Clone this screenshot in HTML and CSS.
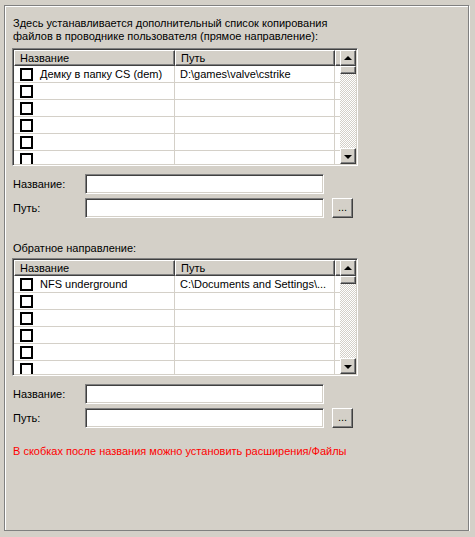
FILE: index.html
```html
<!DOCTYPE html>
<html lang="ru">
<head>
<meta charset="utf-8">
<link rel="stylesheet" href="styles.css">
</head>
<body>
<div class="frame">
  <p class="intro">Здесь устанавливается дополнительный список копирования<br>файлов в проводнике пользователя (прямое направление):</p>

  <div class="list">
    <div class="list-body">
      <div class="list-head">
        <div class="hcell">Название</div>
        <div class="hcell">Путь</div>
        <div class="hcell"></div>
      </div>
      <div class="row"><div class="cell c1"><span class="chk"></span><span class="name">Демку в папку CS (dem)</span></div><div class="cell c2">D:\games\valve\cstrike</div><div class="cell c3"></div></div>
      <div class="row"><div class="cell c1"><span class="chk"></span></div><div class="cell c2"></div><div class="cell c3"></div></div>
      <div class="row"><div class="cell c1"><span class="chk"></span></div><div class="cell c2"></div><div class="cell c3"></div></div>
      <div class="row"><div class="cell c1"><span class="chk"></span></div><div class="cell c2"></div><div class="cell c3"></div></div>
      <div class="row"><div class="cell c1"><span class="chk"></span></div><div class="cell c2"></div><div class="cell c3"></div></div>
      <div class="row"><div class="cell c1"><span class="chk"></span></div><div class="cell c2"></div><div class="cell c3"></div></div>
    </div>
    <div class="vscroll">
      <div class="sbtn"><span class="arr up"></span></div>
      <div class="thumb"></div>
      <div class="track"></div>
      <div class="sbtn"><span class="arr down"></span></div>
    </div>
  </div>

  <div class="field first">
    <span class="lbl">Название:</span>
    <span class="input"></span>
  </div>
  <div class="field">
    <span class="lbl">Путь:</span>
    <span class="input"></span>
    <span class="btn">...</span>
  </div>

  <p class="section">Обратное направление:</p>

  <div class="list">
    <div class="list-body">
      <div class="list-head">
        <div class="hcell">Название</div>
        <div class="hcell">Путь</div>
        <div class="hcell"></div>
      </div>
      <div class="row"><div class="cell c1"><span class="chk"></span><span class="name">NFS underground</span></div><div class="cell c2">C:\Documents and Settings\...</div><div class="cell c3"></div></div>
      <div class="row"><div class="cell c1"><span class="chk"></span></div><div class="cell c2"></div><div class="cell c3"></div></div>
      <div class="row"><div class="cell c1"><span class="chk"></span></div><div class="cell c2"></div><div class="cell c3"></div></div>
      <div class="row"><div class="cell c1"><span class="chk"></span></div><div class="cell c2"></div><div class="cell c3"></div></div>
      <div class="row"><div class="cell c1"><span class="chk"></span></div><div class="cell c2"></div><div class="cell c3"></div></div>
      <div class="row"><div class="cell c1"><span class="chk"></span></div><div class="cell c2"></div><div class="cell c3"></div></div>
    </div>
    <div class="vscroll">
      <div class="sbtn"><span class="arr up"></span></div>
      <div class="thumb"></div>
      <div class="track"></div>
      <div class="sbtn"><span class="arr down"></span></div>
    </div>
  </div>

  <div class="field first">
    <span class="lbl">Название:</span>
    <span class="input"></span>
  </div>
  <div class="field">
    <span class="lbl">Путь:</span>
    <span class="input"></span>
    <span class="btn">...</span>
  </div>

  <p class="note">В скобках после названия можно установить расширения/Файлы</p>
</div>
</body>
</html>
```
FILE: styles.css
```css
html, body {
  margin: 0;
  padding: 0;
  background: #d4d0c8;
}
body {
  font-family: "Liberation Sans", Arial, sans-serif;
  font-size: 11px;
  line-height: 13px;
  color: #000;
  padding: 5px 0 0 4px;
}
.frame {
  box-sizing: border-box;
  width: 465px;
  height: 526px;
  border: 1px solid #808080;
  box-shadow: inset 1px 1px 0 #fff, 1px 1px 0 #fff;
  padding: 11px 0 0 8px;
}
p { margin: 0; }
.intro { margin-bottom: 5px; }

.list {
  box-sizing: border-box;
  width: 346px;
  height: 118px;
  margin-left: -1px;
  border: 1px solid;
  border-color: #808080 #fff #fff #808080;
  box-shadow: inset 1px 1px 0 #404040, inset -1px -1px 0 #d4d0c8;
  padding: 1px;
  display: flex;
  background: #fff;
}
.list-body {
  flex: 1;
  overflow: hidden;
  background: #fff;
}
.list-head {
  display: grid;
  grid-template-columns: 161px 160px 1fr;
  height: 16px;
}
.hcell {
  box-sizing: border-box;
  background: #d4d0c8;
  border: 1px solid;
  border-color: #fff #404040 #404040 #fff;
  box-shadow: inset -1px -1px 0 #808080;
  padding: 1px 0 0 5px;
  line-height: 12px;
  white-space: nowrap;
  overflow: hidden;
}
.row {
  display: grid;
  grid-template-columns: 161px 160px 1fr;
  height: 17px;
  box-sizing: border-box;
  border-bottom: 1px solid #d4d0c8;
}
.cell {
  box-sizing: border-box;
  display: flex;
  align-items: center;
  white-space: nowrap;
  overflow: hidden;
}
.c1, .c2 { border-right: 1px solid #d4d0c8; }
.c1 { padding-left: 6px; }
.c2 { padding-left: 5px; }
.chk {
  box-sizing: border-box;
  width: 13px;
  height: 13px;
  border: 2px solid #000;
  background: #fff;
  flex: none;
}
.name { margin-left: 7px; }

.vscroll {
  width: 16px;
  display: flex;
  flex-direction: column;
}
.sbtn, .thumb {
  box-sizing: border-box;
  background: #d4d0c8;
  border: 1px solid;
  border-color: #fff #404040 #404040 #fff;
  box-shadow: inset -1px -1px 0 #808080;
  flex: none;
}
.sbtn {
  height: 16px;
  display: flex;
  align-items: center;
  justify-content: center;
}
.thumb { height: 8px; }
.track {
  flex: 1;
  background-color: #fff;
  background-image: repeating-conic-gradient(#d4d0c8 0% 25%, #fff 0% 50%);
  background-size: 2px 2px;
}
.arr {
  width: 0;
  height: 0;
  border-left: 4px solid transparent;
  border-right: 4px solid transparent;
}
.arr.up { border-bottom: 4px solid #000; margin-top: -1px; }
.arr.down { border-top: 4px solid #000; margin-top: 1px; }

.field {
  display: flex;
  align-items: center;
  height: 20px;
  margin-top: 4px;
}
.field.first { margin-top: 8px; }
.lbl { width: 72px; flex: none; }
.input {
  box-sizing: border-box;
  width: 239px;
  height: 20px;
  background: #fff;
  border: 1px solid;
  border-color: #808080 #fff #fff #808080;
  box-shadow: inset 1px 1px 0 #404040, inset -1px -1px 0 #d4d0c8;
}
.btn {
  box-sizing: border-box;
  width: 21px;
  height: 20px;
  margin-left: 8px;
  background: #d4d0c8;
  border: 1px solid;
  border-color: #fff #404040 #404040 #fff;
  box-shadow: inset -1px -1px 0 #808080;
  text-align: center;
  line-height: 16px;
}
.section {
  margin-top: 24px;
  margin-bottom: 3px;
}
.note {
  margin-top: 17px;
  color: #ff0000;
}
```
